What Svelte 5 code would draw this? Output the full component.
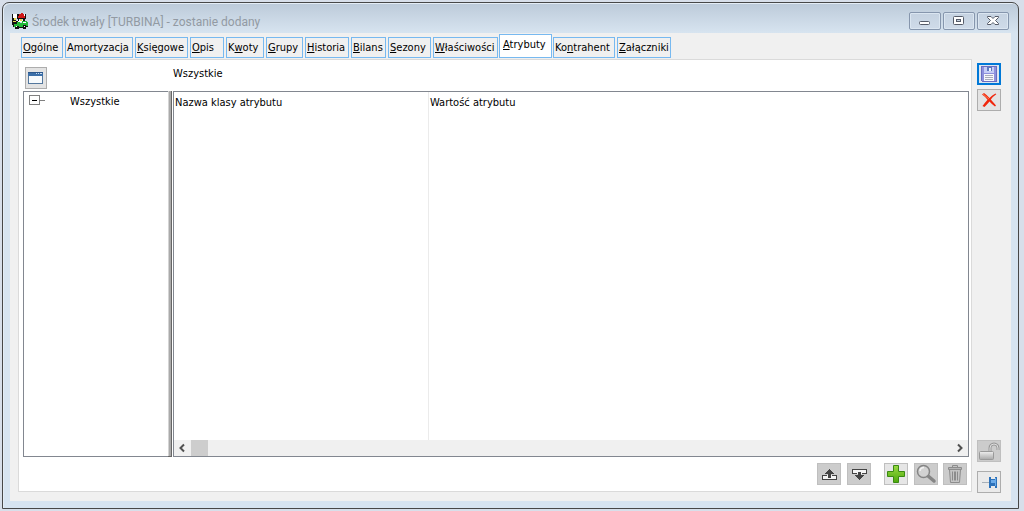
<script>
  const tabs = [
    { pre: '', key: 'O', post: 'gólne', w: 42 },
    { pre: 'Amortyzac', key: 'j', post: 'a', w: 68, plain: true },
    { pre: '', key: 'K', post: 'sięgowe', w: 53 },
    { pre: '', key: 'O', post: 'pis', w: 34 },
    { pre: 'K', key: 'w', post: 'oty', w: 38 },
    { pre: '', key: 'G', post: 'rupy', w: 37 },
    { pre: '', key: 'H', post: 'istoria', w: 44 },
    { pre: '', key: 'B', post: 'ilans', w: 35 },
    { pre: '', key: 'S', post: 'ezony', w: 43 },
    { pre: '', key: 'W', post: 'łaściwości', w: 65 },
    { pre: '', key: 'A', post: 'trybuty', w: 53 },
    { pre: 'Ko', key: 'n', post: 'trahent', w: 62 },
    { pre: '', key: 'Z', post: 'ałączniki', w: 54 }
  ];
  let active = $state(10);
</script>

<div class="desktop">
  <div class="window">
    <header class="titlebar">
      <svg class="appicon" width="17" height="16" viewBox="0 0 17 16" shape-rendering="crispEdges" aria-hidden="true">
        <path fill="#fff" d="M1 1h5v4H1zM11 1h3v5h-3zM5 7h7v2H5z" />
        <path fill="#111" d="M0 1h1v4h2v2h1v1h2v3H1v1H0zM5 1h2v2H6v2H5zM13 1h1v5h-1zM5 5h8v1H5zM6 6h1v2H6zM11 6h2v4h-2zM1 11h15v3h-2v2h-3v-1H7v1H3v-2H1z" />
        <path fill="#d01818" d="M7 1h2V0h2v1h1v2h1v2H6V3h1z" />
        <path fill="#e7d84c" d="M2 5h2v2H2zM1 8h3v1H1zM8 6h2v2H8z" />
        <path fill="#20b838" d="M5 9h3v1h2V8h5v1h1v4h-2v-1h-3v2H7v-1H4v1H2v-3h3z" />
        <path fill="#fff" d="M4 13h1v1H4zM12 13h1v1h-1zM11 9h3v1h-3z" />
      </svg>
      <h1>Środek trwały [TURBINA] - zostanie dodany</h1>
      <div class="caption">
        <button aria-label="Minimalizuj">
          <svg width="30" height="16" viewBox="0 0 30 16"><rect x="9.500" y="8.500" width="10" height="3" rx="1" fill="#fff" stroke="#555b68" /></svg>
        </button>
        <button aria-label="Maksymalizuj">
          <svg width="30" height="16" viewBox="0 0 30 16"><rect x="9.500" y="3.500" width="10" height="8" rx="1" fill="#fff" stroke="#555b68" /><rect x="12.500" y="6.500" width="4" height="2" fill="#c4d0df" stroke="#555b68" /></svg>
        </button>
        <button aria-label="Zamknij">
          <svg width="30" height="16" viewBox="0 0 30 16"><path d="M9.500 3.500h3.500l2 2 2-2h3.500v1L17.500 7.500l3 3v1H17l-2-2-2 2H9.500v-1l3-3-3-3z" fill="#fff" stroke="#555b68" stroke-linejoin="round" /></svg>
        </button>
      </div>
    </header>

    <main class="client">
      <div class="left">
        <div class="tabs" role="tablist">
          {#each tabs as t, i}
            <button role="tab" class="tab" class:active={i === active} aria-selected={i === active} style:width="{t.w}px" onclick={() => (active = i)}>{t.pre}{#if t.plain}{t.key}{:else}<u>{t.key}</u>{/if}{t.post}</button>
          {/each}
        </div>
        <section class="page">
          <div class="head">
            <button class="tool" aria-label="Okno">
              <svg width="20" height="20" viewBox="0 0 20 20" shape-rendering="crispEdges"><path fill="#f7fafc" stroke="#54779d" d="M2.500 7.500h14v8h-14z" /><path fill="#3c6fa8" d="M2 4h15v4H2z" /><path fill="#2c578c" d="M2 4h15v1H2z" /><path fill="#c9dcf0" d="M10 5h1v1h-1zM12 5h1v1h-1zM14 5h2v1h-2z" /></svg>
            </button>
            <span>Wszystkie</span>
          </div>
          <div class="panes">
            <div class="tree">
              <svg width="18" height="11" viewBox="0 0 18 11" shape-rendering="crispEdges" aria-hidden="true"><path fill="none" stroke="#808080" d="M.5.5h10v9H.5zM11 5.500h5" /><path stroke="#000" d="M3 5.500h5" /></svg>
              <span>Wszystkie</span>
            </div>
            <div class="splitter"></div>
            <div class="grid">
              <table>
                <thead><tr><th>Nazwa klasy atrybutu</th><th>Wartość atrybutu</th></tr></thead>
                <tbody><tr><td></td><td></td></tr></tbody>
              </table>
              <div class="scroll">
                <button aria-label="W lewo"><svg width="17" height="16" viewBox="0 0 17 16"><path d="M10 4.500L6.500 8l3.500 3.500" /></svg></button>
                <div class="thumb"></div>
                <button aria-label="W prawo"><svg width="17" height="16" viewBox="0 0 17 16"><path d="M7 4.500L10.500 8 7 11.500" /></svg></button>
              </div>
            </div>
          </div>
          <div class="actions">
            <button class="tool off" aria-label="W górę">
              <svg width="22" height="20" viewBox="0 0 22 20" shape-rendering="crispEdges"><path fill="#f5f5f5" d="M4 11h15v5H4z" /><path fill="#444" d="M11 5h1v1h1v1h1v1h1v1h1v1h-3v4h-3v-4H7V9h1V8h1V7h1V6h1zM4 11h5v1H5v3h13v-3h-4v-1h5v5H4z" /></svg>
            </button>
            <button class="tool off" aria-label="W dół">
              <svg width="22" height="20" viewBox="0 0 22 20" shape-rendering="crispEdges"><path fill="#f5f5f5" d="M4 5h15v5H4z" /><path fill="#444" d="M4 5h15v5h-5V9h4V6H5v3h4v1H4zM10 8h3v3h3v1h-1v1h-1v1h-1v1h-1v1h-1v-1h-1v-1H9v-1H8v-1H7v-1h3z" /></svg>
            </button>
            <button class="tool off add" aria-label="Dodaj">
              <svg width="22" height="20" viewBox="0 0 22 20"><defs><linearGradient id="green" x2="0" y2="1"><stop offset="0" stop-color="#9ada43" /><stop offset="1" stop-color="#4ca80a" /></linearGradient></defs><path fill="url(#green)" stroke="#3a8a12" d="M8.500 1.500h5v6h6v5h-6v6h-5v-6h-6v-5h6z" /></svg>
            </button>
            <button class="tool off" aria-label="Szukaj">
              <svg width="22" height="20" viewBox="0 0 22 20"><path d="M12.500 11.500l6.500 5.500" stroke="#858585" stroke-width="3.500" stroke-linecap="round" /><circle cx="8.500" cy="7.500" r="6" fill="#d2d2d2" stroke="#858585" stroke-width="1.500" /><path d="M5 7a4 4 0 014-3.500" stroke="#f2f2f2" stroke-width="1.500" fill="none" /></svg>
            </button>
            <button class="tool off trash" aria-label="Usuń">
              <svg width="22" height="20" viewBox="0 0 22 20"><path fill="#c4c4c4" stroke="#8c8c8c" d="M8.500 3.500v-2h5v2M5.500 5.500h11l-1 13h-9z" /><path fill="#b4b4b4" stroke="#8c8c8c" d="M4.500 3.500h13v2h-13z" /><path stroke="#8c8c8c" d="M8.500 7.500v9M13.500 7.500v9" /><path stroke="#8c8c8c" stroke-width="2" d="M11 7.500v9" /></svg>
            </button>
          </div>
        </section>
      </div>

      <aside class="side">
        <button class="tool save" aria-label="Zapisz">
          <svg width="20" height="18" viewBox="0 0 20 18" shape-rendering="crispEdges"><path fill="#8d90dc" stroke="#6b6dc0" d="M2.500 1.500h15v15h-14l-1-1z" /><path fill="#c6cdf6" d="M5 2h10v6H5z" /><path fill="#5c78bd" d="M8 2h5v4H8z" /><path fill="#eef4ff" d="M10 3h2v3h-2z" /><path fill="#f6f6fa" d="M5 9h10v7H5z" /><path fill="#a9acb9" d="M6 10h8v1H6zM6 12h8v1H6zM6 14h8v1H6z" /></svg>
        </button>
        <button class="tool" aria-label="Anuluj">
          <svg width="22" height="20" viewBox="0 0 22 20"><path fill="#f0260c" d="M4 4.500l2-1.500q3 2 5.500 5Q14 5 17.500 3.500l.8.8Q15 6.500 12.800 9.500q2.700 3 5.200 6l-1 1q-3-2-5.500-5Q9 14.500 6.500 17L4.500 16q2.500-3.500 5-6.300Q7 6.500 4 4.500z" /><path d="M5 4l6 5" stroke="#ff7a50" /></svg>
        </button>
        <button class="tool off lock" aria-label="Odblokuj">
          <svg width="22" height="20" viewBox="0 0 22 20"><defs><linearGradient id="metal" x2="0" y2="1"><stop offset="0" stop-color="#eee" /><stop offset="1" stop-color="#a8a8a8" /></linearGradient></defs><path d="M12 11V7a4 4 0 018 0v2" fill="none" stroke="#999" stroke-width="3" /><path d="M12 11V7a4 4 0 018 0v2" fill="none" stroke="#ddd" /><rect x="1.500" y="10.500" width="14" height="8" rx="1" fill="url(#metal)" stroke="#999" /></svg>
        </button>
        <button class="tool pin" aria-label="Przypnij">
          <svg width="22" height="20" viewBox="0 0 22 20" shape-rendering="crispEdges"><path fill="#a8b0b8" d="M4 10h7v1H4z" /><path fill="#2d72ba" d="M11 5h2v2h4V5h2v11h-2v-2h-4v2h-2z" /><path fill="#6cacea" d="M13 8h4v3h-4zM17 6h1v8h-1z" /></svg>
        </button>
      </aside>
    </main>
  </div>
</div>

<style>
  :global(body) { margin: 0; }
  * { box-sizing: border-box; }
  .desktop {
    height: 100vh;
    padding: 2px 5px 2px 2px;
    background: #d8dfea;
    font: 11px/14px "DejaVu Sans Condensed", "DejaVu Sans", sans-serif;
    color: #000;
  }
  button { font: inherit; color: inherit; padding: 0; }
  svg { display: block; flex: none; }
  .window {
    height: 100%;
    display: flex;
    flex-direction: column;
    padding: 0 7px 7px;
    border: 1px solid #484848;
    border-radius: 7px 7px 0 0;
    background: linear-gradient(#bccad9, #d7e4f0 30px, #d7e4f1);
    box-shadow: inset 1px 1px #e4edf6;
  }
  .titlebar { height: 30px; flex: none; display: flex; align-items: flex-end; padding: 0 2px 4px; }
  h1 { margin: 0 0 0 3px; flex: 1; font: 12px/14px Roboto, "Open Sans", sans-serif; color: #929aa3; white-space: nowrap; }
  .caption { display: flex; gap: 2px; align-self: flex-start; padding-top: 9px; }
  .caption button {
    width: 32px;
    height: 18px;
    border: 1px solid #8696ad;
    border-radius: 2px;
    background: linear-gradient(#c5d2e1, #cfdbe9);
    box-shadow: inset 0 0 0 1px #dbe6f1;
  }
  .client { flex: 1; min-height: 0; display: flex; background: #f0f0f0; padding: 2px 10px 8px 8px; }
  .left { flex: 1; min-width: 0; display: flex; flex-direction: column; padding-bottom: 1px; }
  .tabs { display: flex; align-items: flex-end; gap: 2px; height: 24px; padding: 0 0 1px 3px; flex: none; }
  .tab {
    height: 21px;
    flex: none;
    padding: 1px 0 0 1px;
    border: 1px solid #77b9f0;
    background: #f0f0f0;
    text-align: left;
    white-space: nowrap;
  }
  .tab.active { height: 24px; margin: 0 -1px; padding: 0 0 2px 3px; background: #fff; }
  u { text-underline-offset: 1px; text-decoration-skip-ink: none; }
  .page {
    flex: 1;
    min-height: 0;
    display: flex;
    flex-direction: column;
    padding: 7px 2px 6px 4px;
    border: 1px solid #dadada;
    background: #fff;
  }
  .head { display: flex; align-items: flex-start; gap: 126px; height: 24px; padding-left: 2px; flex: none; }
  .tool {
    width: 24px;
    height: 22px;
    flex: none;
    display: flex;
    align-items: center;
    justify-content: center;
    border: 1px solid #adadad;
    background: #e3e3e3;
  }
  .head .tool { width: 22px; }
  .tool.off { border-color: #bfbfbf; background: #ccc; }
  .panes { flex: 1; min-height: 0; display: flex; }
  .tree { width: 145px; flex: none; display: flex; gap: 23px; padding: 3px 0 0 5px; border: 1px solid #828790; border-right: 0; }
  .splitter { width: 4px; margin-right: 1px; flex: none; background: linear-gradient(90deg, #d4d4d4 25%, #aaa 25% 75%, #666 75%); border-bottom: 1px solid #666; }
  .grid { flex: 1; min-width: 0; display: flex; flex-direction: column; border: 1px solid #828790; }
  table { flex: 1; display: flex; flex-direction: column; }
  thead, tbody, tr { display: flex; }
  tbody { flex: 1; }
  tr { flex: 1; }
  th, td { flex: 1; padding: 4px 1px 2px; font-weight: normal; text-align: left; }
  th:first-child, td:first-child { flex: 0 0 255px; border-right: 1px solid #ebebeb; }
  .scroll { height: 16px; flex: none; display: flex; background: #f0f0f0; }
  .scroll button { width: 17px; border: 0; background: none; }
  .scroll button:last-child { margin-left: auto; }
  .scroll path { fill: none; stroke: #505050; stroke-width: 2; }
  .thumb { width: 17px; background: #cdcdcd; }
  .actions { display: flex; justify-content: flex-end; gap: 6px; padding: 6px 2px 0 0; flex: none; }
  .actions .add { margin-left: 7px; background: #e6e6e6; }
  .actions .trash { margin-left: -1px; }
  .side { width: 29px; flex: none; display: flex; flex-direction: column; align-items: flex-end; gap: 4px; padding: 28px 0 0; }
  .save { border: 2px solid #0078d7; background: #dde6f0; }
  .lock { margin-top: auto; }
  .pin { margin-top: 5px; background: #eaeaea; }
</style>
